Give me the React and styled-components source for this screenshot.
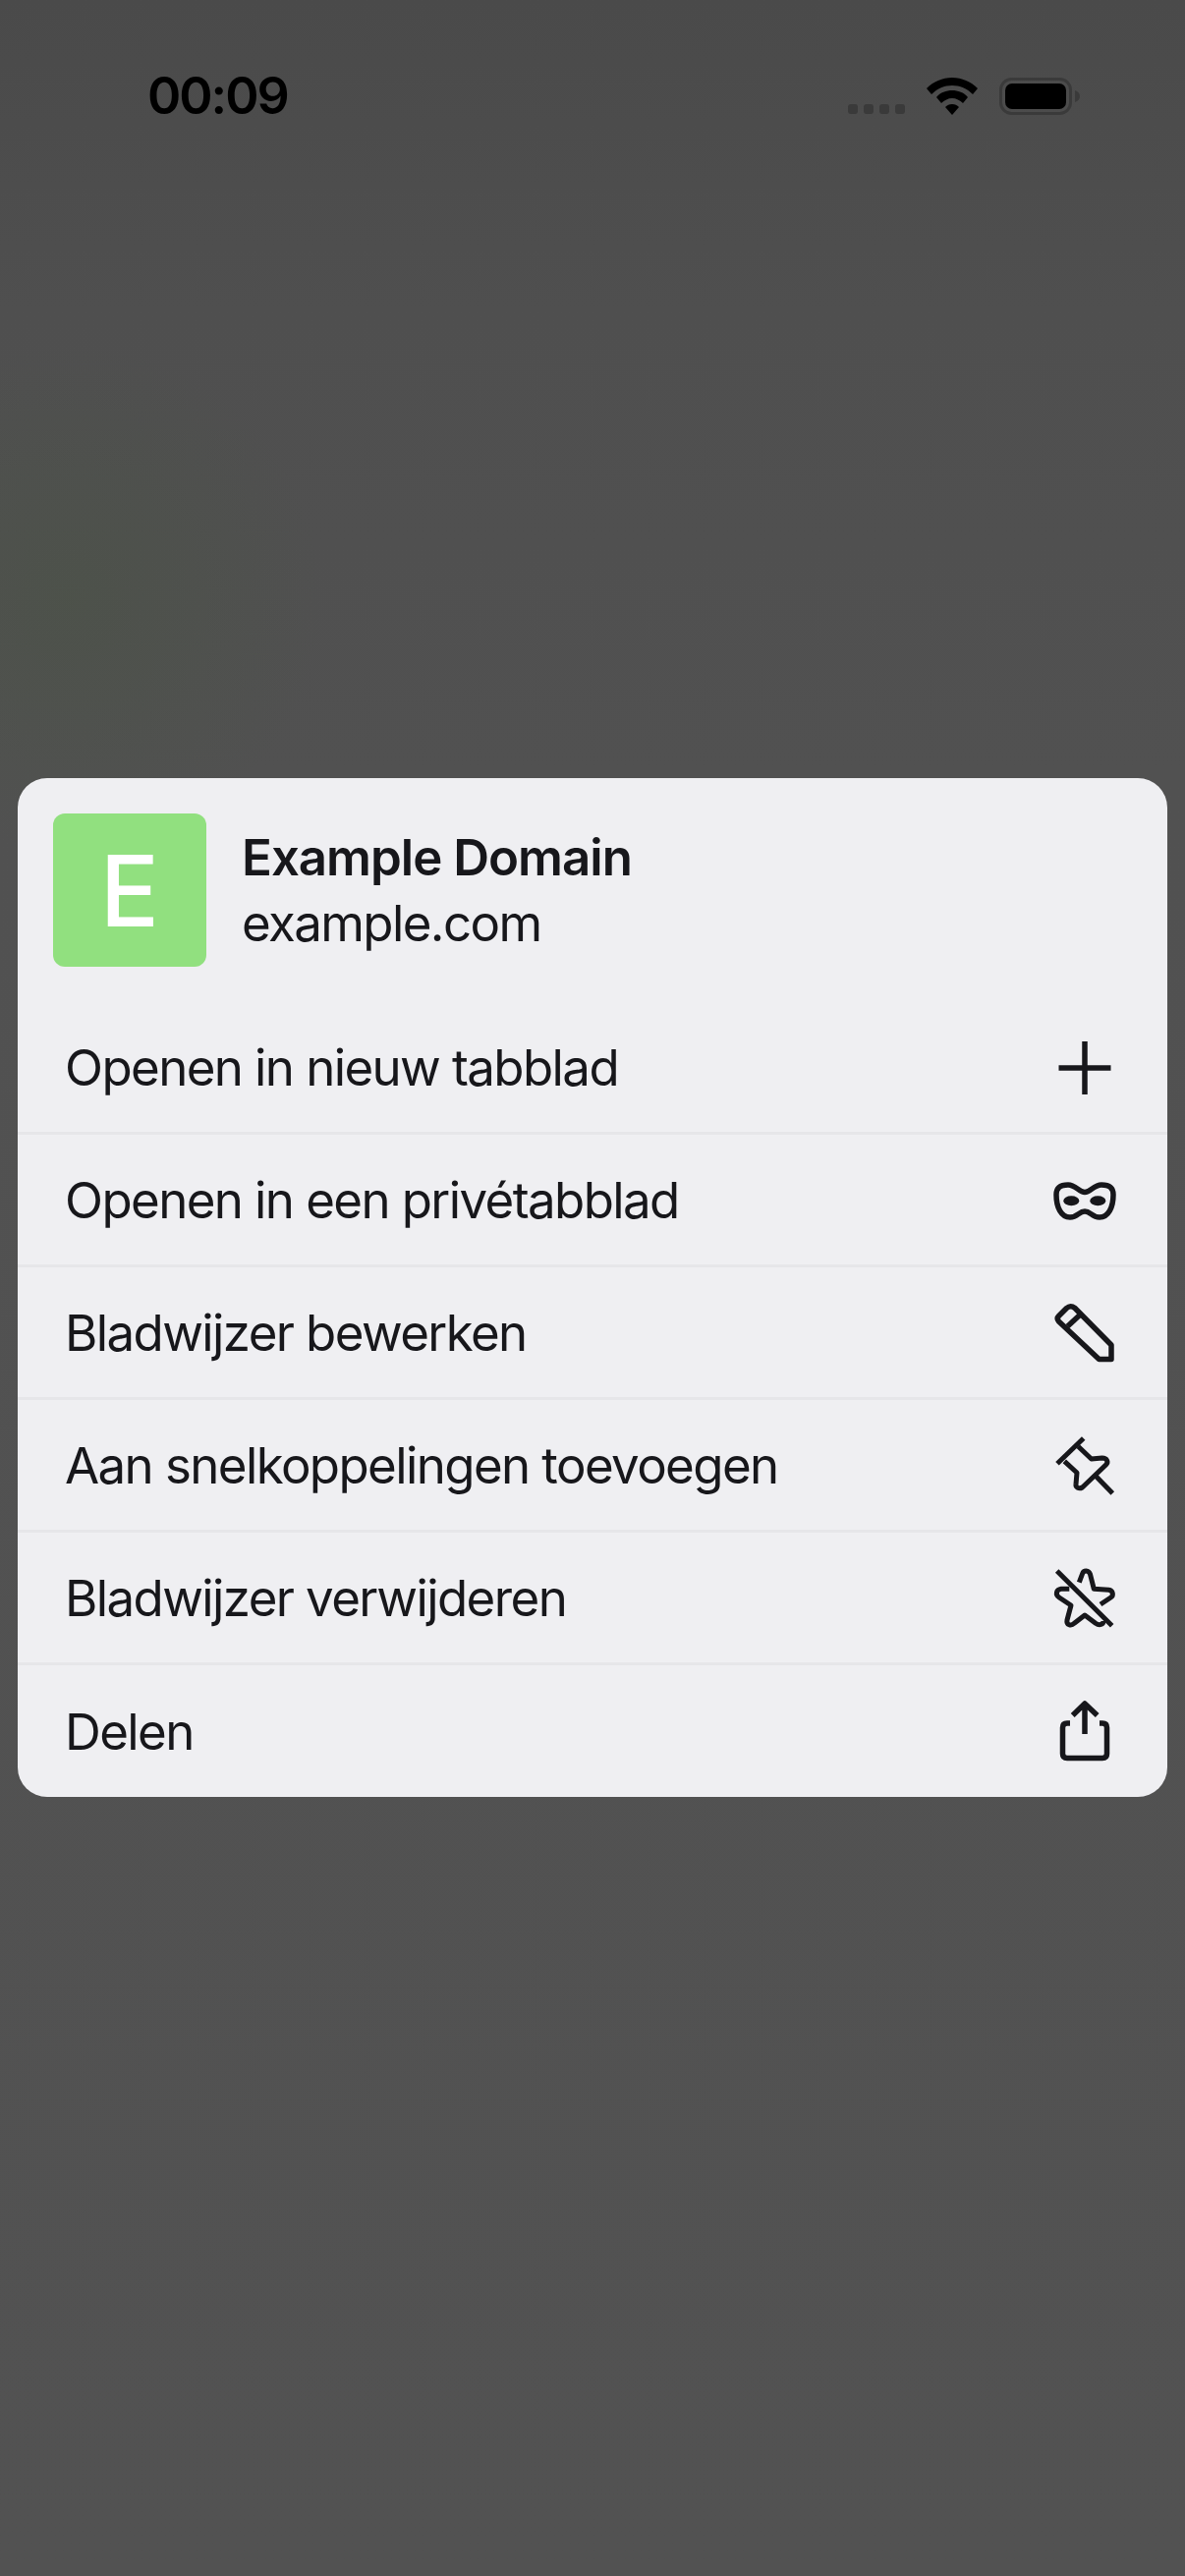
import React from "react"
import styled, { createGlobalStyle } from "styled-components"

const GlobalStyle = createGlobalStyle`
  html, body {
    margin: 0;
    padding: 0;
    background: #505050;
  }
`

const Screen = styled.div`
  display: flex;
  flex-direction: column;
  width: 1206px;
  height: 2622px;
  overflow: hidden;
  font-family: Inter, "Liberation Sans", sans-serif;
  background:
    radial-gradient(circle at 70px 610px, rgba(70, 85, 62, 0.32), rgba(70, 85, 62, 0) 260px),
    linear-gradient(180deg, #4a4a4a 0%, #4f4f4f 12%, #515151 30%, #525252 100%);
`

const StatusBar = styled.div`
  display: flex;
  align-items: center;
  justify-content: space-between;
  height: 196px;
  padding: 0 106px 0 150px;
  box-sizing: border-box;
  margin-bottom: 596px;
`

const Time = styled.div`
  font-size: 52px;
  font-weight: 600;
  line-height: 1;
  color: #000;
  letter-spacing: -2px;
`

const StatusIcons = styled.div`
  display: flex;
  align-items: flex-end;
  gap: 22px;
`

const Dots = styled.div`
  display: flex;
  gap: 6px;
  margin-bottom: 1px;
`

const Dot = styled.span`
  width: 10px;
  height: 10px;
  border-radius: 3px;
  background: #3a3a3a;
`

const Menu = styled.div`
  display: flex;
  flex-direction: column;
  margin: 0 18px;
  height: 1037px;
  border-radius: 30px;
  background: #efeff2;
  color: #17171b;
  overflow: hidden;
`

const Header = styled.div`
  display: flex;
  align-items: flex-start;
  gap: 36px;
  padding: 36px 0 0 36px;
  height: 228px;
  box-sizing: border-box;
`

const Tile = styled.div`
  display: flex;
  align-items: center;
  justify-content: center;
  width: 156px;
  height: 156px;
  border-radius: 12px;
  background: #91e07f;
  color: #fff;
  font-size: 100px;
  font-weight: 500;
`

const HeaderText = styled.div`
  display: flex;
  flex-direction: column;
  padding-top: 11px;
`

const Title = styled.div`
  font-size: 51px;
  font-weight: 600;
  line-height: 67px;
  letter-spacing: -1px;
`

const Subtitle = styled.div`
  font-size: 51px;
  font-weight: 400;
  line-height: 67px;
  letter-spacing: -1.6px;
`

const Row = styled.div`
  display: flex;
  align-items: center;
  justify-content: space-between;
  height: ${(p) => p.$height}px;
  padding: 0 48px 0 48px;
  box-sizing: border-box;
  border-bottom: ${(p) => (p.$last ? "none" : "3px solid #e6e6e9")};
`

const Label = styled.span`
  font-size: 51px;
  font-weight: 400;
  line-height: 1;
  letter-spacing: -1.6px;
`

const IconBox = styled.svg`
  display: block;
  width: 72px;
  height: 72px;
  fill: none;
  stroke: #17171b;
  stroke-width: ${(p) => p.$stroke || 5.5};
  stroke-linecap: butt;
  stroke-linejoin: round;
`

const IconFill = styled.ellipse`
  fill: #17171b;
  stroke: none;
`

const PlusIcon = () => (
  <IconBox viewBox="0 0 72 72">
    <path d="M36 10v54M9.5 37h53" />
  </IconBox>
)

const MaskIcon = () => (
  <IconBox viewBox="0 0 72 72">
    <path d="M19 21C27 21 30 28.5 36 28.5C42 28.5 45 21 53 21C61 21 65 24 65 31C65 44 60 54 51 54C43 54 42 48 36 48C30 48 29 54 21 54C12 54 7 44 7 31C7 24 11 21 19 21Z" />
    <IconFill cx="22.3" cy="37.3" rx="8" ry="5" />
    <IconFill cx="49.3" cy="37.3" rx="8" ry="5" />
  </IconBox>
)

const PencilIcon = () => (
  <IconBox viewBox="0 0 72 72">
    <path d="M9.5 19.5L17.5 11.5Q21.5 8 26 11.5L63 49V63.5H50.5L9.5 25Q7 22 9.5 19.5Z" />
    <path d="M18.5 30L32 17.5" />
  </IconBox>
)

const PinIcon = () => (
  <IconBox viewBox="0 0 72 72" $stroke={5}>
    <path d="M8 34.7L34.7 9" />
    <path d="M29.3 17.3L42.7 30L53.7 29C58.5 29 60.5 33 57.5 36L33.5 59C30 61 26.5 59 27 55.7L28 44L15.3 32.3" />
    <path d="M47 47.3L64.3 65" />
  </IconBox>
)

const StarIcon = () => (
  <IconBox viewBox="0 0 72 72" $stroke={5}>
    <path d="M7.7 9L63.7 64.7" />
    <path d="M30.3 20.7L33.7 11.5C35 8 40 8 41.5 12.3L45.3 27.3L60.3 28.3C65 29 65.5 34 62.5 36L52 43" />
    <path d="M20.3 27.3L12 27.3C7 28 5.5 33 10.3 36.3L22 44L18 59C17 64 22 65.5 25.3 62.3L36 54L47 62.3C51 65 55 63.5 55 60" />
  </IconBox>
)

const ShareIcon = () => (
  <IconBox viewBox="0 0 72 72">
    <path d="M36 39V8M23.7 20L36 8L48.7 20" />
    <path d="M21 28H18Q13.5 28 13.5 32.5V59Q13.5 63.5 18 63.5H54Q58.5 63.5 58.5 59V32.5Q58.5 28 54 28H51" />
  </IconBox>
)

const WifiIcon = () => (
  <svg width="52" height="38" viewBox="0 0 52 38">
    <path fill="#000" d="M26 0C36 0 45 4 52 11L47 17C41 11 34 8 26 8S11 11 5 17L0 11C7 4 16 0 26 0z" />
    <path fill="#000" d="M26 13c6 0 12 2 16 7l-5 6c-3-3-7-5-11-5s-8 2-11 5l-5-6c4-5 10-7 16-7z" />
    <path fill="#000" d="M26 27c3 0 5 1 7 3l-7 8-7-8c2-2 4-3 7-3z" />
  </svg>
)

const BatteryIcon = () => (
  <svg width="83" height="38" viewBox="0 0 83 38">
    <rect x="1.5" y="1.5" width="71" height="35" rx="11" fill="none" stroke="#3a3a3a" strokeWidth="3" />
    <rect x="6" y="6" width="62" height="26" rx="7" fill="#000" />
    <path d="M77 13c3 1 5 3 5 6s-2 5-5 6z" fill="#3a3a3a" />
  </svg>
)

const rows = [
  { label: "Openen in nieuw tabblad", Icon: PlusIcon, height: 135 },
  { label: "Openen in een privétabblad", Icon: MaskIcon, height: 135 },
  { label: "Bladwijzer bewerken", Icon: PencilIcon, height: 135 },
  { label: "Aan snelkoppelingen toevoegen", Icon: PinIcon, height: 135 },
  { label: "Bladwijzer verwijderen", Icon: StarIcon, height: 135 },
  { label: "Delen", Icon: ShareIcon, height: 134, last: true },
]

const App = () => {
  return (
    <Screen>
      <GlobalStyle />
      <StatusBar>
        <Time>00:09</Time>
        <StatusIcons>
          <Dots>
            <Dot />
            <Dot />
            <Dot />
            <Dot />
          </Dots>
          <WifiIcon />
          <BatteryIcon />
        </StatusIcons>
      </StatusBar>
      <Menu>
        <Header>
          <Tile>E</Tile>
          <HeaderText>
            <Title>Example Domain</Title>
            <Subtitle>example.com</Subtitle>
          </HeaderText>
        </Header>
        {rows.map(({ label, Icon, height, last }) => (
          <Row key={label} $height={height} $last={last}>
            <Label>{label}</Label>
            <Icon />
          </Row>
        ))}
      </Menu>
    </Screen>
  )
}

export default App
